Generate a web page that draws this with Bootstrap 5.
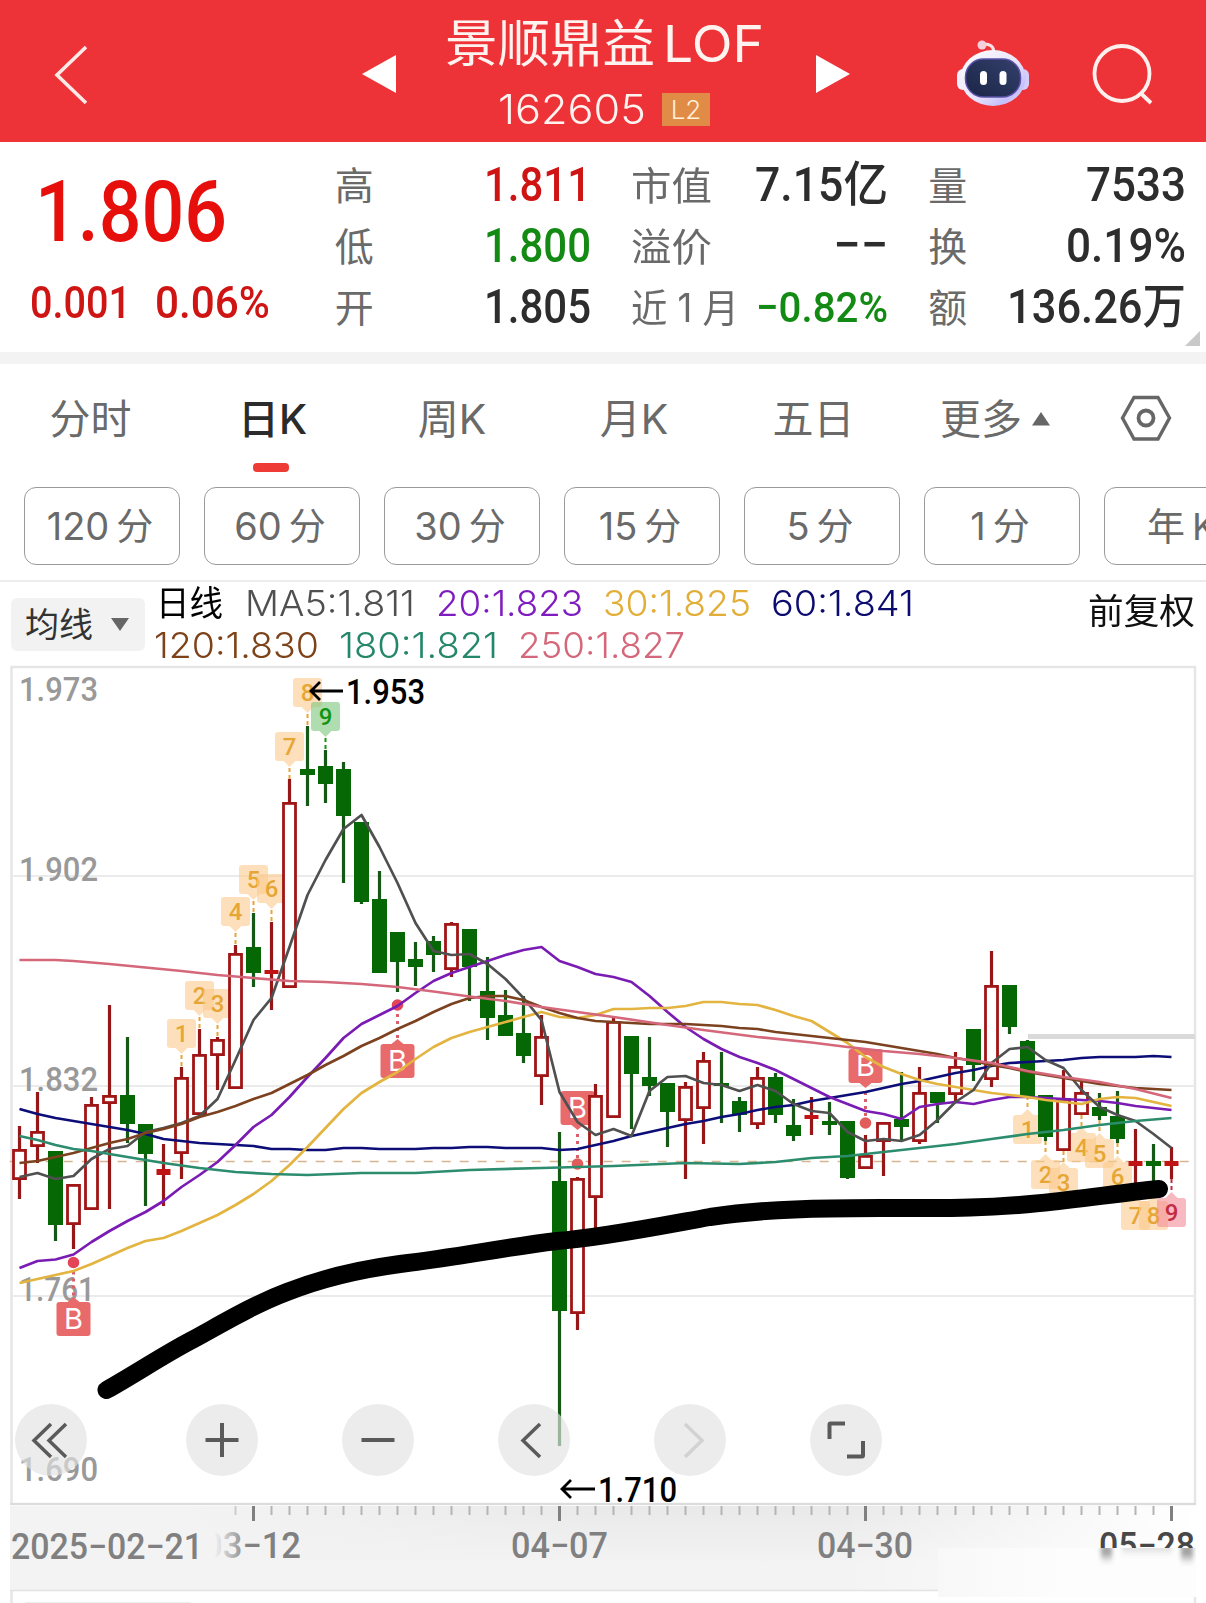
<!DOCTYPE html>
<html lang="zh-CN">
<head>
<meta charset="utf-8">
<meta name="viewport" content="width=device-width, initial-scale=1">
<title>景顺鼎益LOF 162605</title>
<link href="https://cdn.jsdelivr.net/npm/bootstrap@5.3.0/dist/css/bootstrap.min.css" rel="stylesheet">
<style>
  body{width:1206px;height:1603px;overflow:hidden;background:#fff;font-family:Inter,"Noto Sans CJK SC",sans-serif;color:#6a6a6a;line-height:1}
  svg{display:block}
  .fit{display:inline-block;white-space:nowrap;text-align:left}
  .fit>span{display:inline-block;transform-origin:0 50%}
  .din{font-family:Roboto,"Noto Sans CJK SC",sans-serif;font-weight:500}
  .up{color:#e60f0c}.up2{color:#cf1414}.down{color:#138a13}.ink{color:#2d2d2d}
  .topbar{height:142px;background:#ee3338;color:#fff}
  .topbar .icon-back{margin-left:54px}
  .topbar .icon-prev{margin-left:274px}
  .title-box{width:420px}
  .fund-name{font-size:51px;height:52px;line-height:52px;margin-top:18px;font-weight:400;color:#fff3f0;padding-right:3px}
  .fund-code{font-size:41px;height:40px;line-height:40px;margin-top:19px;font-weight:350;color:#fff3f0;padding-right:4px}
  .level-tag{background:#e08c47;width:48px;height:33px;line-height:33px;font-size:26px;margin-left:16px;color:#fff0da}
  .quote{height:210px;padding:12px 20px 0 32px}
  .price-col{width:303px}
  .price-now{font-size:86px;height:90px;line-height:90px;margin:13px 0 0 3px}
  .price-chg{font-size:45px;line-height:50px;margin:21px 0 0 -2px}
  .stat-col .stat-row{height:61px;font-size:39px;font-weight:400;padding-top:1px}
  .stat-val{font-size:48px}
  .stat-val.small-val{font-size:43px}
  .dash-val{padding-bottom:3px}
  .corner{right:6px;bottom:6px}
  .strip{height:12px;background:#f3f3f3}
  .tabs{height:110px;font-size:41px;font-weight:400}
  .tabs .tab{height:110px;line-height:110px;text-align:center}
  .tabs .on{color:#2b2b2b;font-weight:500}
  .tabs .on::after{content:"";position:absolute;left:50%;bottom:2px;width:36px;height:9px;border-radius:4px;background:#ee3b36;margin-left:-20px}
  .periods{height:106px;padding:13px 0 0 24px;gap:24px;overflow:hidden}
  .period{flex:0 0 156px;height:78px;border:1.5px solid #9a9a9a;border-radius:12px;font-size:37px;font-weight:400;gap:7px;padding-right:4px}
  .period span:first-child:not(:last-child){font-size:38px}
  .legend-row{height:84px;border-top:2px solid #ececec;padding:0 11px 0 11px}
  .ma-pick{width:134px;height:53px;margin-top:16px;border-radius:6px;background:#f2f2f2;color:#333;font-size:34px;gap:18px;padding-left:14px}
  .ma-lines{width:930px;font-size:35px;font-weight:350}
  .ma-lines>div{height:42px;line-height:42px}
  .adj{font-size:35px;color:#111;margin-top:11px}
  .chart-tools{left:15px;top:740px;width:867px}
  .tool{width:72px;height:72px;border-radius:50%;background:rgba(226,226,226,.66)}
</style>
</head>
<body>
<header class="topbar d-flex align-items-start">
  <svg class="icon-back" style="margin-top:45px" width="34" height="60" fill="none" stroke="#ffe9e6" stroke-width="3.6"><path d="M32 2 3 30 32 58"/></svg>
  <svg class="icon-prev" style="margin-top:55px" width="34" height="38"><path d="M0 19 34 0V38Z" fill="#fff"/></svg>
  <div class="title-box text-center">
    <div class="fund-name d-flex justify-content-center"><span class="fit" data-w="210">景顺鼎益</span><span class="fit" data-w="101" style="margin-left:8px">LOF</span></div>
    <div class="fund-code d-flex justify-content-center align-items-center"><span class="fit" data-w="148">162605</span><span class="level-tag">L2</span></div>
  </div>
  <svg style="margin-top:55px" width="34" height="38"><path d="M0 0 34 19 0 38Z" fill="#fff"/></svg>
  <svg style="margin:38px 0 0 105px" width="76" height="70">
    <defs><linearGradient id="hd" x1="0" y1="0" x2="1" y2="1"><stop offset="0" stop-color="#fff"/><stop offset=".55" stop-color="#e9e3fb"/><stop offset=".8" stop-color="#c3bffb"/><stop offset="1" stop-color="#f8e6f6"/></linearGradient>
    <linearGradient id="fc" x1="0" y1="1" x2="1" y2="0"><stop offset="0" stop-color="#1b2548"/><stop offset="1" stop-color="#34406b"/></linearGradient></defs>
    <path d="M27 6q12-1 12 9" fill="none" stroke="#f8dfe6" stroke-width="3"/><circle cx="27" cy="7" r="4.500" fill="#f6cfdc"/>
    <rect x="2" y="31" width="12" height="21" rx="6" fill="#f2effd"/><rect x="62" y="31" width="12" height="21" rx="6" fill="#d3cdfb"/>
    <ellipse cx="38" cy="40" rx="32.500" ry="28" fill="url(#hd)"/>
    <rect x="10.500" y="21" width="55" height="38" rx="18" fill="url(#fc)" stroke="#5a52a8" stroke-width="1.500"/>
    <rect x="25" y="33" width="7" height="14" rx="3.500" fill="#fff"/><rect x="44.500" y="33" width="7" height="14" rx="3.500" fill="#fff"/>
  </svg>
  <svg style="margin:43px 0 0 61px" width="64" height="64" fill="none" stroke="#fff0ee" stroke-width="3.800"><circle cx="30" cy="30.500" r="27.500"/><path d="M48.500 50 59 60"/></svg>
</header>

<section class="quote d-flex position-relative">
  <div class="price-col din up">
    <div class="price-now"><span class="fit" data-w="192">1.806</span></div>
    <div class="price-chg up2 d-flex" style="gap:24px"><span class="fit" data-w="101">0.001</span><span class="fit" data-w="115">0.06%</span></div>
  </div>
  <div class="stat-col" style="width:257px">
    <div class="stat-row d-flex justify-content-between align-items-center"><span>高</span><span class="stat-val din up2 fit" data-w="107">1.811</span></div>
    <div class="stat-row d-flex justify-content-between align-items-center"><span>低</span><span class="stat-val din down fit" data-w="107">1.800</span></div>
    <div class="stat-row d-flex justify-content-between align-items-center"><span>开</span><span class="stat-val din ink fit" data-w="107">1.805</span></div>
  </div>
  <div class="stat-col" style="width:257px;margin-left:40px">
    <div class="stat-row d-flex justify-content-between align-items-center"><span class="fit" data-w="81">市值</span><span class="stat-val din ink fit" data-w="133">7.15亿</span></div>
    <div class="stat-row d-flex justify-content-between align-items-center"><span class="fit" data-w="81">溢价</span><span class="stat-val din ink fit dash-val" data-w="55">−−</span></div>
    <div class="stat-row d-flex justify-content-between align-items-center"><span class="fit" data-w="108">近 1 月</span><span class="stat-val small-val din down fit" data-w="132">−0.82%</span></div>
  </div>
  <div class="stat-col" style="width:258px;margin-left:40px">
    <div class="stat-row d-flex justify-content-between align-items-center"><span>量</span><span class="stat-val din ink fit" data-w="100">7533</span></div>
    <div class="stat-row d-flex justify-content-between align-items-center"><span>换</span><span class="stat-val din ink fit" data-w="120">0.19%</span></div>
    <div class="stat-row d-flex justify-content-between align-items-center"><span>额</span><span class="stat-val din ink fit" data-w="179">136.26万</span></div>
  </div>
  <svg class="corner position-absolute" width="15" height="15"><path d="M15 0V15H0Z" fill="#c9c9c9"/></svg>
</section>
<div class="strip"></div>

<nav class="tabs d-flex">
  <div class="tab" style="width:181px">分时</div>
  <div class="tab on position-relative" style="width:183px">日K</div>
  <div class="tab" style="width:176px">周K</div>
  <div class="tab" style="width:188px">月K</div>
  <div class="tab" style="width:171px">五日</div>
  <div class="tab d-flex align-items-center" style="width:221px;padding-left:41px;gap:10px">更多<svg width="18" height="14"><path d="M9 0 18 13.500H0Z" fill="#666"/></svg></div>
  <svg style="margin-top:31px" width="52" height="47" fill="none" stroke="#666"><path d="M14 2.500H38L49.500 23 38 44H14L2.500 23Z" stroke-width="3.400"/><circle cx="26" cy="23" r="7.500" stroke-width="3.800"/></svg>
</nav>
<div class="periods d-flex">
  <div class="period d-flex justify-content-center align-items-center"><span>120</span><span>分</span></div>
  <div class="period d-flex justify-content-center align-items-center"><span>60</span><span>分</span></div>
  <div class="period d-flex justify-content-center align-items-center"><span>30</span><span>分</span></div>
  <div class="period d-flex justify-content-center align-items-center"><span>15</span><span>分</span></div>
  <div class="period d-flex justify-content-center align-items-center"><span>5</span><span>分</span></div>
  <div class="period d-flex justify-content-center align-items-center"><span>1</span><span>分</span></div>
  <div class="period d-flex align-items-center" style="padding-left:42px"><span>年</span><span>K</span></div>
</div>

<div class="legend-row d-flex">
  <div class="ma-pick d-flex align-items-center"><span>均线</span><svg width="18" height="13"><path d="M0 0H18L9 13Z" fill="#666"/></svg></div>
  <div class="ma-lines">
    <div class="d-flex" style="padding-left:11px"><span class="fit" data-w="67" style="color:#000;font-weight:400">日线</span><span class="fit" data-w="170" style="color:#505050;margin-left:22px">MA5:1.811</span><span class="fit" data-w="147" style="color:#7f1cbf;margin-left:21px">20:1.823</span><span class="fit" data-w="148" style="color:#e2ae38;margin-left:20px">30:1.825</span><span class="fit" data-w="143" style="color:#0c0c70;margin-left:20px">60:1.841</span></div>
    <div class="d-flex" style="padding-left:9px"><span class="fit" data-w="165" style="color:#7d4218">120:1.830</span><span class="fit" data-w="159" style="color:#25876a;margin-left:20px">180:1.821</span><span class="fit" data-w="167" style="color:#d4687a;margin-left:20px">250:1.827</span></div>
  </div>
  <div class="adj ms-auto"><span class="fit" data-w="107" style="line-height:36px">前复权</span></div>
</div>

<main class="position-relative">
  <svg id="kchart" width="1206" height="939" viewBox="0 664 1206 939" font-family="Roboto, sans-serif" font-weight="500"></svg>
  <div class="chart-tools position-absolute d-flex">
    <div class="tool"><svg width="72" height="72" fill="none" stroke="#5a5a5a" stroke-width="3.500"><path d="M36 20 19 36.500 36 53M51 20 34 36.500 51 53"/></svg></div>
    <div class="tool" style="margin-left:99px"><svg width="72" height="72" stroke="#5a5a5a" stroke-width="4"><path d="M19.500 36H52.500M36 19V53"/></svg></div>
    <div class="tool" style="margin-left:84px"><svg width="72" height="72" stroke="#5a5a5a" stroke-width="4"><path d="M19.500 36H52.500"/></svg></div>
    <div class="tool" style="margin-left:84px"><svg width="72" height="72" fill="none" stroke="#5a5a5a" stroke-width="3.500"><path d="M42 20 25 36.500 42 53"/></svg></div>
    <div class="tool" style="margin-left:84px"><svg width="72" height="72" fill="none" stroke="#d2d2d2" stroke-width="3.500"><path d="M31 20 48 36.500 31 53"/></svg></div>
    <div class="tool" style="margin-left:84px"><svg width="72" height="72" fill="none" stroke="#5a5a5a" stroke-width="4"><path d="M19.500 35V20.500Q19.500 19.500 20.500 19.500H35M53 37V51.500Q53 52.500 52 52.500H37"/></svg></div>
  </div>
</main>

<script src="https://cdn.jsdelivr.net/npm/bootstrap@5.3.0/dist/js/bootstrap.bundle.min.js"></script>
<script>
document.querySelectorAll('.fit').forEach(function(el){
  var s=document.createElement('span');
  s.textContent=el.textContent; el.textContent=''; el.appendChild(s);
  var w=+el.dataset.w, n=s.getBoundingClientRect().width;
  s.style.transform='scaleX('+(w/n)+')'; s.style.width=n+'px';
  el.style.width=w+'px'; s.style.marginRight=(w-n)+'px';
});

// Candles: direction, high, body top, body bottom, low
var C=[['r',1126,1149,1180,1199],['r',1092,1131,1147,1163],['g',1151,1151,1225,1241],['r',1184,1184,1225,1249],['r',1097,1104,1210,1210],
['r',1005,1095,1104,1209],['g',1037,1095,1124,1143],['g',1124,1124,1154,1206],['r',1144,1169,1175,1206],['r',1067,1077,1154,1179],
['r',1029,1054,1115,1115],['r',1037,1039,1056,1090],['r',945,953,1089,1089],['g',913,947,973,987],['r',922,970,974,1010],
['r',779,802,988,988],['g',726,769,775,806],['g',750,766,784,803],['g',762,769,816,883],['g',822,822,902,904],
['g',871,899,973,973],['g',932,932,962,992],['g',942,959,967,986],['g',936,941,955,972],['r',922,923,970,977],
['g',929,929,967,1001],['g',957,991,1018,1040],['g',990,1015,1036,1036],['g',996,1033,1056,1063],['r',1015,1036,1077,1105],
['g',1132,1181,1311,1446],['r',1177,1178,1314,1330],['r',1084,1095,1198,1228],['r',1018,1021,1118,1118],['g',1036,1036,1074,1129],
['g',1037,1077,1086,1096],['g',1083,1083,1112,1147],['r',1082,1086,1121,1179],['r',1052,1060,1109,1144],['g',1052,1083,1086,1123],
['g',1097,1101,1115,1132],['r',1067,1077,1125,1129],['g',1073,1077,1115,1123],['g',1099,1125,1136,1141],['r',1097,1115,1119,1135],
['g',1102,1121,1125,1135],['g',1121,1121,1178,1179],['r',1135,1155,1169,1169],['r',1122,1122,1142,1176],['g',1072,1119,1127,1140],
['r',1067,1092,1142,1144],['g',1092,1092,1103,1123],['r',1052,1066,1095,1102],['g',1029,1029,1065,1081],['r',951,985,1080,1087],
['g',985,985,1027,1034],['g',1040,1041,1096,1096],['g',1095,1095,1137,1141],['r',1070,1098,1151,1151],['r',1082,1092,1115,1115],
['g',1093,1107,1116,1120],['g',1091,1116,1139,1143],['r',1129,1161,1166,1184],['g',1144,1161,1166,1184],['r',1147,1161,1166,1179]];
var X=function(i){return 19.5+18*i};
// Moving averages: one value per candle, or [index, value] knots
var M=[
['#0d0d78',[1109,1114,1118,1121,1124,1127,1130,1134,1139,1141,1143,1144,1145,1146,1149,1149,1150,1150,1148,1148,1149,1149,1149,1148,1148,1147,1147,1148,1148,1148,1150,1149,1145,1141,1136,1132,1128,1124,1121,1117,1114,1110,1107,1105,1101,1098,1095,1092,1088,1084,1081,1077,1073,1070,1066,1063,1062,1061,1060,1058,1057,1057,1057,1056,1057]],
['#7a1cb4',[1268,1261,1259.5,1254.5,1242,1231,1221,1212,1201,1187,1175,1162,1145,1127,1115,1097,1077,1058,1038,1024,1015,1006,993,981,973,967,961,955,950,947,961,967,974,977,982,996,1012,1027,1039,1049,1057,1063,1070,1079,1088,1097,1104,1111,1114,1119,1107,1104,1102,1104,1100,1097,1097,1098,1099,1100,1101,1103,1106,1108,1110]],
['#e3b440',[1283,1279,1275,1271,1264,1256,1248,1241,1238,1231,1223,1215,1205,1194,1181,1165,1147,1128,1109,1093,1082,1072,1059,1047,1038,1032,1027,1022,1017,1012,1017,1018,1015,1009,1009,1008,1008,1006,1002,1002,1004,1005,1010,1016,1021,1032,1043,1057,1067,1074,1080,1084,1087,1090,1093,1095,1097,1100,1102,1104,1099,1097,1098,1102,1106]],
['#505050',[1177,1173,1179,1176,1159,1149,1146,1132,1128,1123,1116,1099,1060,1020,998,947,895,860,829,815,847,883,923,951,955,954,964,979,998,1020,1092,1122,1135,1129,1136,1091,1077,1076,1083,1085,1091,1085,1091,1104,1111,1113,1132,1141,1139,1141,1135,1120,1102,1090,1063,1049,1047,1060,1068,1090,1107,1115,1121,1134,1148]],
['#7c4220',[1163,1161,1157,1153,1148,1143,1139,1133,1129,1124,1117,1112,1106,1099,1093,1084,1075,1065,1056,1046,1038,1029,1021,1012,1004,998,996,996,1000,1007,1013,1018,1021,1022,1023,1024,1024,1024,1025,1026,1028,1029,1032,1034,1036,1038,1040,1042,1045,1048,1051,1054,1058,1061,1065,1068,1072,1075,1078,1081,1084,1086,1088,1089,1090]],
['#2c8c6e',[[0,1136],[1,1140],[2,1145],[3,1149],[4,1151],[6,1157],[8,1163],[10,1168],[12,1172],[14,1174],[16,1175],[19,1173],[22,1173],[25,1170],[29,1168],[31,1167],[33,1166],[37,1163],[40,1164],[42,1162],[44,1158],[46,1156],[48,1152],[50,1148],[52,1144],[54,1139],[56,1134],[58,1130],[60,1125],[62,1121],[64,1118]]],
['#d4687a',[[0,960],[2,960],[3,961],[5,964],[7,967.5],[9,971],[11,975],[13,978],[15,981],[17,982],[19,984],[21,987],[23,991.5],[25,996.5],[27,1001],[29,1007],[31,1012],[33,1017],[36,1025],[38,1030],[41,1037],[44,1042.5],[46,1047],[48,1051],[50,1054],[52,1058],[54,1063],[56,1071],[58,1077],[60,1082],[62,1089],[64,1098]]]];
// Count labels: index, box top, digit, side, tone
var N=[[9,1019,1,'a'],[10,981,2,'a'],[11,989,3,'a'],[12,897,4,'a'],[13,865,5,'a'],[14,874,6,'a'],[15,732,7,'a'],[16,678,8,'a'],[17,702,9,'a','g'],
[56,1115,1,'b'],[57,1160,2,'b'],[58,1168,3,'b'],[59,1133,4,'b'],[60,1139,5,'b'],[61,1162,6,'b'],[62,1201,7,'b'],[63,1201,8,'b'],[64,1198,9,'b','r']];
// Buy marks: index, box top, dot y
var B=[[3,1302,1262.5],[21,1044,1005],[31,1091,1164],[47,1049,1123]];
var s='';
function line(x1,y1,x2,y2,c,w,e){s+='<line x1="'+x1+'" y1="'+y1+'" x2="'+x2+'" y2="'+y2+'" stroke="'+c+'" stroke-width="'+w+'" '+(e||'')+'/>'}
function text(t,x,y,w,c,z){s+='<text x="'+x+'" y="'+y+'" textLength="'+w+'" lengthAdjust="spacingAndGlyphs" font-size="'+(z||34)+'" fill="'+c+'">'+t+'</text>'}
s+='<defs><linearGradient id="ax" x1="0" x2="0" y1="0" y2="1"><stop offset="0" stop-color="#e9e9e9"/><stop offset=".7" stop-color="#f3f3f3"/></linearGradient>'
 +'<linearGradient id="fl" x1="0" x2="1"><stop offset="0" stop-color="#f3f3f3"/><stop offset=".15" stop-color="#f3f3f3"/><stop offset=".5" stop-color="#f3f3f3" stop-opacity="0"/><stop offset=".7" stop-color="#fff" stop-opacity="0"/><stop offset="1" stop-color="#fff"/></linearGradient>'
 +'<linearGradient id="fd" x1="0" x2="1"><stop offset=".3" stop-color="#f3f3f3"/><stop offset="1" stop-color="#f3f3f3" stop-opacity="0"/></linearGradient>'
 +'<linearGradient id="sm" x1="0" x2="1"><stop offset="0" stop-color="#f8f8f8"/><stop offset=".5" stop-color="#fdfdfd"/></linearGradient>'
 +'<filter id="bl" x="-20%" y="-40%" width="140%" height="200%"><feGaussianBlur stdDeviation="2 5"/></filter><clipPath id="sc"><rect x="938" y="1548" width="258" height="49"/></clipPath></defs>';
s+='<rect x="11.500" y="667" width="1183.500" height="837" fill="none" stroke="#e6e6e6" stroke-width="2.500"/>';
[876,1086,1296].forEach(function(y){line(12,y,1195,y,'#ebebeb',2)});
text('1.973',19,701,79,'#999');text('1.902',19,881,79,'#999');text('1.832',19,1091,79,'#999');text('1.761',19,1301,76,'#999');text('1.690',19,1481,79,'#999');
line(9.7,1161.5,1195,1161.5,'#d5b58f',1.6,'stroke-dasharray="9 9"');
line(1028,1036.5,1195,1036.5,'#dadada',5);
N.forEach(function(n){
  var x=X(n[0]),y=n[1],c=n[4]=='g'?['#7cc67c','#129412']:n[4]=='r'?['#f48a98','#c22c40']:['#fcc98a','#e6a636'],o=n[4]?.6:.58;
  s+='<g><path d="M'+(x-14.5)+' '+(y+3)+'q0-3 3-3h23q3 0 3 3v23q0 3-3 3h-23q-3 0-3-3z'+(n[3]=='a'?'M'+(x-6)+' '+(y+29)+'l6 6 6-6z':'M'+(x-6)+' '+y+'l6-6 6 6z')+'" fill="'+c[0]+'" fill-opacity="'+o+'"/>';
  if(n[3]=='a')line(x,y+36,x,C[n[0]][1],c[1],2,'stroke-dasharray="4 3"');else line(x,C[n[0]][4],x,y-6,c[1],2,'stroke-dasharray="4 3"');
  s+='<text x="'+x+'" y="'+(y+23)+'" text-anchor="middle" font-size="24" fill="'+c[1]+'">'+n[2]+'</text></g>';
});
B.forEach(function(b){
  var x=X(b[0]),y=b[1],d=b[2];
  s+='<rect x="'+(x-17)+'" y="'+y+'" width="34" height="34" rx="3" fill="#e96a6a"/>';
  s+=d<y?'<path d="M'+(x-6)+' '+y+'l6-5 6 5z" fill="#e96a6a"/>':'<path d="M'+(x-6)+' '+(y+34)+'l6 5 6-5z" fill="#e96a6a"/>';
  line(x,d<y?d+9:y+43,x,d<y?y-6:d-6,'#d9606a',3,'stroke-dasharray="3 4"');
  s+='<circle cx="'+x+'" cy="'+d+'" r="5.800" fill="'+(d<y?'#e34457':'#e25c5c')+'"/>';
  s+='<text x="'+x+'" y="'+(y+27)+'" text-anchor="middle" font-family="Inter,sans-serif" font-weight="400" font-size="29" fill="#fff">B</text>';
});
C.forEach(function(c,i){
  var x=X(i),g=c[0]=='g',k=g?'#165816':'#961717',h=c[3]-c[2];
  if(c[1]<c[2])line(x,c[1],x,c[2]+(h<7?h:1),k,3.2);
  if(c[4]>c[3])line(x,c[3]-(h<7?h:1),x,c[4],k,3.2);
  if(g)s+='<rect x="'+(x-7.5)+'" y="'+c[2]+'" width="15" height="'+h+'" fill="#056805"/>';
  else if(h<7)s+='<rect x="'+(x-7)+'" y="'+c[2]+'" width="14" height="'+h+'" fill="#c01414"/>';
  else s+='<rect x="'+(x-6)+'" y="'+(c[2]+1.4)+'" width="12" height="'+(h-2.8)+'" fill="#fff" stroke="#a01515" stroke-width="2.800"/>';
});
M.forEach(function(m){
  s+='<polyline fill="none" stroke-linejoin="round" stroke-width="2.700" stroke="'+m[0]+'" points="'+m[1].map(function(v,i){return v.length?X(v[0])+','+v[1]:X(i)+','+v}).join(' ')+'"/>';
});
// Hand-drawn trend stroke
s+='<path d="M106.500 1390C135 1374 165 1354 192 1340C225 1322 255 1304 287 1292C325 1277 370 1268 400 1264C460 1257 500 1248 557 1241C600 1238 660 1226 710 1217C750 1211 785 1209 830 1208.500C880 1207 930 1209 970 1207.500C1040 1206 1100 1195 1159 1189" fill="none" stroke="#000" stroke-width="18" stroke-linecap="round"/>';
s+='<path d="M343 691H311M320 682L311 691L320 700M595 1489H563M571 1480L562 1489L571 1498" fill="none" stroke="#000" stroke-width="2.800"/>';
text('1.953',346,704,79,'#000',35);text('1.710',598,1502,79,'#000',35);
// Date axis
s+='<rect x="10" y="1506" width="1186" height="84" fill="url(#ax)"/><rect x="10" y="1506" width="1186" height="84" fill="url(#fl)"/>';
line(10,1504,1196,1504,'#dcdcdc',2);line(10,1590.5,1196,1590.5,'#e2e2e2',1.6);
for(var i=12;i<65;i++){var big=[13,30,47,64].indexOf(i)>=0;line(X(i),1506,X(i),big?1521:1515,big?'#808080':'#b4b4b4',big?3:2,i<13?'opacity=".6"':'')}
text('03−12',203,1558,98,'#808080',36);
s+='<rect x="200" y="1526" width="48" height="40" fill="url(#fd)"/>';
text('2025−02−21',11,1559,192,'#808080',36);text('04−07',511,1558,97,'#808080',36);text('04−30',817,1558,96,'#808080',36);text('05−28',1099,1558,96,'#484848',36);
s+='<rect x="938" y="1548" width="258" height="49" fill="url(#sm)"/>';
s+='<g clip-path="url(#sc)"><g filter="url(#bl)" fill="#6c6c6c" opacity=".7"><rect x="1101" y="1544" width="11" height="13"/><rect x="1181" y="1544" width="12" height="14"/><rect x="1122" y="1543" width="50" height="6" opacity=".6"/></g></g>';
line(11.5,1591,11.5,1603,'#e6e6e6',2.5);line(1195,1597,1195,1603,'#e6e6e6',2.5);
s+='<rect x="25" y="1602" width="166" height="1" fill="#efefef"/>';
document.getElementById('kchart').innerHTML=s;
</script>
</body>
</html>
